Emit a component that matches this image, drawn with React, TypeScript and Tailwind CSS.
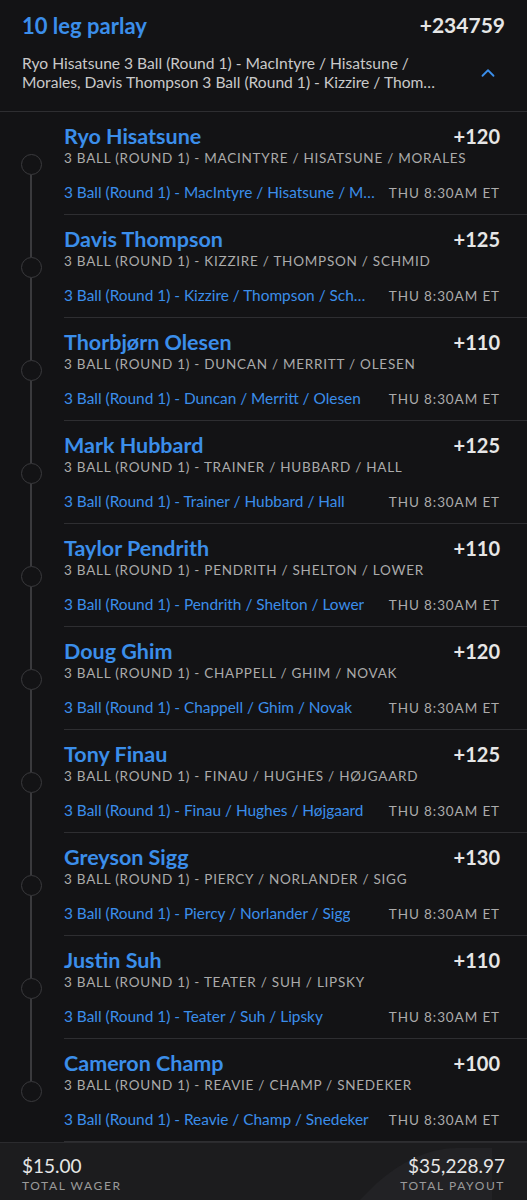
import { ChevronUp } from "lucide-react";

type Leg = {
  name: string;
  odds: string;
  market: string;
  event: string;
};

const legs: Leg[] = [
  {
    name: "Ryo Hisatsune",
    odds: "+120",
    market: "3 Ball (Round 1) - MacIntyre / Hisatsune / Morales",
    event: "3 Ball (Round 1) - MacIntyre / Hisatsune / Morales",
  },
  {
    name: "Davis Thompson",
    odds: "+125",
    market: "3 Ball (Round 1) - Kizzire / Thompson / Schmid",
    event: "3 Ball (Round 1) - Kizzire / Thompson / Schmid",
  },
  {
    name: "Thorbjørn Olesen",
    odds: "+110",
    market: "3 Ball (Round 1) - Duncan / Merritt / Olesen",
    event: "3 Ball (Round 1) - Duncan / Merritt / Olesen",
  },
  {
    name: "Mark Hubbard",
    odds: "+125",
    market: "3 Ball (Round 1) - Trainer / Hubbard / Hall",
    event: "3 Ball (Round 1) - Trainer / Hubbard / Hall",
  },
  {
    name: "Taylor Pendrith",
    odds: "+110",
    market: "3 Ball (Round 1) - Pendrith / Shelton / Lower",
    event: "3 Ball (Round 1) - Pendrith / Shelton / Lower",
  },
  {
    name: "Doug Ghim",
    odds: "+120",
    market: "3 Ball (Round 1) - Chappell / Ghim / Novak",
    event: "3 Ball (Round 1) - Chappell / Ghim / Novak",
  },
  {
    name: "Tony Finau",
    odds: "+125",
    market: "3 Ball (Round 1) - Finau / Hughes / Højgaard",
    event: "3 Ball (Round 1) - Finau / Hughes / Højgaard",
  },
  {
    name: "Greyson Sigg",
    odds: "+130",
    market: "3 Ball (Round 1) - Piercy / Norlander / Sigg",
    event: "3 Ball (Round 1) - Piercy / Norlander / Sigg",
  },
  {
    name: "Justin Suh",
    odds: "+110",
    market: "3 Ball (Round 1) - Teater / Suh / Lipsky",
    event: "3 Ball (Round 1) - Teater / Suh / Lipsky",
  },
  {
    name: "Cameron Champ",
    odds: "+100",
    market: "3 Ball (Round 1) - Reavie / Champ / Snedeker",
    event: "3 Ball (Round 1) - Reavie / Champ / Snedeker",
  },
];

const font = { fontFamily: '"Lato", "Open Sans", sans-serif' };

const LegRow = ({ leg, first, last }: { leg: Leg; first: boolean; last: boolean }) => (
  <div className="flex">
    <div className="relative w-[64px] shrink-0">
      {!first && <div className="absolute left-[30px] top-0 h-[42px] w-[1.5px] bg-[#3a3a3d]" />}
      <div className="absolute left-[21px] top-[42px] h-[21px] w-[21px] rounded-full border-[1.5px] border-[#3a3a3d]" />
      {!last && <div className="absolute left-[30px] top-[63px] bottom-0 w-[1.5px] bg-[#3a3a3d]" />}
    </div>
    <div className="min-w-0 flex-1 border-b border-[#2e2e31] pt-[12px] pb-[10px] pr-[27px]">
      <div className="flex h-[24px] items-center justify-between">
        <span className="text-[21.5px] font-bold text-[#3b8eea]">{leg.name}</span>
        <span className="text-[20px] font-bold text-[#e6e6e6]">{leg.odds}</span>
      </div>
      <div className="h-[20px] truncate text-[13.5px] leading-[20px] tracking-[0.75px] text-[#ababab] uppercase">
        {leg.market}
      </div>
      <div className="mt-[14px] flex h-[22px] items-center justify-between gap-[12px]">
        <span className="min-w-0 truncate text-[15.4px] text-[#3b8eea]">{leg.event}</span>
        <span className="shrink-0 text-[13.5px] tracking-[0.9px] text-[#ababab]">THU 8:30AM ET</span>
      </div>
    </div>
  </div>
);

export default function App() {
  return (
    <div className="flex min-h-[1200px] w-[527px] flex-col bg-[#131315]" style={font}>
      <div className="border-b border-[#2e2e31] px-[22px] pt-[12px] pb-[19px]">
        <div className="flex h-[26px] items-center justify-between">
          <span className="text-[22px] font-bold text-[#3b8eea]">10 leg parlay</span>
          <span className="text-[21px] font-bold text-[#e6e6e6]">+234759</span>
        </div>
        <div className="mt-[16px] flex items-center justify-between gap-4">
          <div className="flex min-w-0 flex-col text-[15.6px] leading-[19px] text-[#c9c9c9]">
            <span>Ryo Hisatsune 3 Ball (Round 1) - MacIntyre / Hisatsune /</span>
            <span className="w-[418px] truncate">
              Morales, Davis Thompson 3 Ball (Round 1) - Kizzire / Thompson / Schmid, Thorbjørn
              Olesen 3 Ball (Round 1) - Duncan / Merritt / Olesen
            </span>
          </div>
          <ChevronUp className="mr-[6px] shrink-0 text-[#3b8eea]" size={22} strokeWidth={2} />
        </div>
      </div>
      <div className="flex flex-col">
        {legs.map((leg, i) => (
          <LegRow key={leg.name} leg={leg} first={i === 0} last={i === legs.length - 1} />
        ))}
      </div>
      <div className="relative flex flex-1 items-start justify-between overflow-hidden border-t border-[#2b2b2e] bg-[#1c1c1e] px-[22px] pt-[12px] pb-[10px]">
        <svg
          className="pointer-events-none absolute right-[10px] top-[0px]"
          width="200"
          height="70"
          viewBox="0 0 200 70"
        >
          <path d="M30 70 L60 40 Q100 5 140 5 L175 5 L175 70 Z" fill="#222225" />
        </svg>
        <div className="relative flex flex-col">
          <span className="text-[19px] leading-[22px] text-[#e6e6e6]">$15.00</span>
          <span className="text-[12px] leading-[18px] tracking-[1.6px] text-[#9a9a9a]">TOTAL WAGER</span>
        </div>
        <div className="relative flex flex-col items-end">
          <span className="text-[19px] leading-[22px] text-[#e6e6e6]">$35,228.97</span>
          <span className="text-[12px] leading-[18px] tracking-[1.6px] text-[#9a9a9a]">TOTAL PAYOUT</span>
        </div>
      </div>
    </div>
  );
}
